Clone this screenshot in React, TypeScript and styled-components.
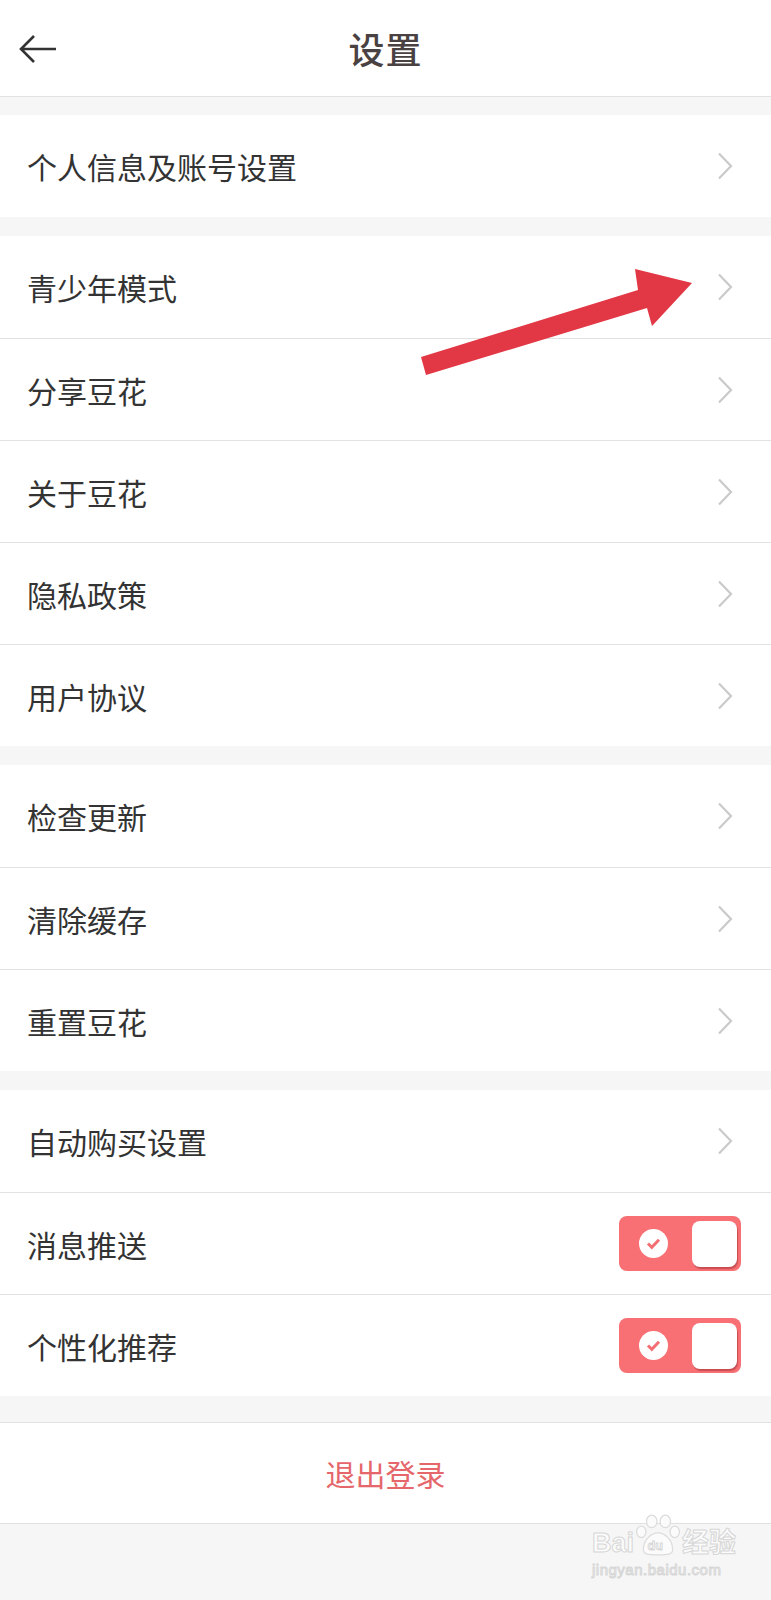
import styled, { createGlobalStyle } from "styled-components";

type RowType = {
  label: string;
  toggle?: boolean;
};

const groups: RowType[][] = [
  [{ label: "个人信息及账号设置" }],
  [
    { label: "青少年模式" },
    { label: "分享豆花" },
    { label: "关于豆花" },
    { label: "隐私政策" },
    { label: "用户协议" },
  ],
  [{ label: "检查更新" }, { label: "清除缓存" }, { label: "重置豆花" }],
  [
    { label: "自动购买设置" },
    { label: "消息推送", toggle: true },
    { label: "个性化推荐", toggle: true },
  ],
];

const GlobalStyle = createGlobalStyle`
  body {
    margin: 0;
    background: #f6f6f6;
    font-family: "Noto Sans CJK SC", "Noto Sans", sans-serif;
  }
`;

const BackIcon = () => (
  <svg width="40" height="30" viewBox="0 0 40 30" fill="none">
    <path d="M38 15H3M16 2L3 15l13 13" stroke="#333" strokeWidth="2.6" />
  </svg>
);

const Chevron = () => (
  <svg width="16" height="28" viewBox="0 0 16 28" fill="none">
    <path d="M2 1.5l12 12.5-12 12.5" stroke="#cacaca" strokeWidth="2.2" />
  </svg>
);

const Toggle = () => (
  <StyledToggle>
    <StyledCheck>
      <svg width="17" height="17" viewBox="0 0 17 17" fill="none">
        <path d="M3 8.5l3.8 3.8L14 4.8" stroke="#f36f73" strokeWidth="3" />
      </svg>
    </StyledCheck>
    <StyledKnob />
  </StyledToggle>
);

const App = () => {
  return (
    <StyledPage>
      <GlobalStyle />
      <StyledHeader>
        <StyledBack>
          <BackIcon />
        </StyledBack>
        <StyledTitle>设置</StyledTitle>
      </StyledHeader>

      {groups.map((group, gi) => (
        <StyledGroup key={`group-${gi}`} $first={gi === 0}>
          {group.map((row) => (
            <StyledRow key={row.label}>
              <StyledLabel>{row.label}</StyledLabel>
              {row.toggle ? <Toggle /> : <Chevron />}
            </StyledRow>
          ))}
        </StyledGroup>
      ))}

      <StyledLogout>退出登录</StyledLogout>

      {/* annotation arrow drawn over the screenshot */}
      <StyledArrow width="300" height="130" viewBox="0 0 300 130">
        <polygon
          points="11,97 228,30 225,9 282,23 242,66 237,48 16,115"
          fill="#e23744"
        />
      </StyledArrow>

      <StyledWatermark>
        <StyledMarkTop>
          Bai
          <svg width="46" height="42" viewBox="0 0 44 40" fill="none">
            <g stroke="#dcdcdc" strokeWidth="1.2" fill="#fbfbfb">
              <ellipse cx="16" cy="7" rx="5" ry="6" />
              <ellipse cx="29" cy="7" rx="5" ry="6" />
              <ellipse cx="6" cy="17" rx="4.5" ry="5.5" />
              <ellipse cx="38" cy="17" rx="4.5" ry="5.5" />
              <path d="M8 34c0-10 8-16 14-16s14 6 14 16c0 4-4 5-14 5S8 38 8 34z" />
            </g>
            <text x="12" y="34" fontSize="12" fill="#fbfbfb" stroke="#d4d4d4" strokeWidth="0.8" fontFamily="Liberation Sans, sans-serif">
              du
            </text>
          </svg>
          经验
        </StyledMarkTop>
        <StyledMarkBottom>jingyan.baidu.com</StyledMarkBottom>
      </StyledWatermark>
    </StyledPage>
  );
};

export default App;

const StyledPage = styled.div`
  position: relative;
  min-height: 1600px;
  background: #f6f6f6;
  color: #333;
`;

const StyledHeader = styled.header`
  height: 97px;
  box-sizing: border-box;
  background: #fff;
  border-bottom: 1px solid #e2e2e2;
  display: flex;
  align-items: center;
  justify-content: center;
  position: relative;
`;

const StyledBack = styled.div`
  position: absolute;
  left: 18px;
  top: 34px;
  display: flex;
`;

const StyledTitle = styled.h1`
  margin: 0;
  font-size: 36px;
  font-weight: 500;
  color: #4a4242;
  letter-spacing: 1px;
`;

const StyledGroup = styled.section<{ $first?: boolean }>`
  margin-top: ${(p) => (p.$first ? "18px" : "19px")};
  background: #fff;
`;

const StyledRow = styled.div`
  height: 102px;
  box-sizing: border-box;
  display: flex;
  align-items: center;
  justify-content: space-between;
  padding: 0 30px 0 27px;

  & + & {
    border-top: 1px solid #e2e2e2;
  }

  & > svg {
    margin-right: 8px;
  }
`;

const StyledLabel = styled.span`
  font-size: 30px;
  color: #333;
  line-height: 1;
`;

const StyledToggle = styled.div`
  width: 122px;
  height: 55px;
  border-radius: 8px;
  background: #f87073;
  display: flex;
  align-items: center;
  justify-content: space-between;
  padding: 0 4px 0 20px;
  box-sizing: border-box;
`;

const StyledCheck = styled.div`
  width: 29px;
  height: 29px;
  border-radius: 50%;
  background: #fff;
  display: flex;
  align-items: center;
  justify-content: center;
`;

const StyledKnob = styled.div`
  width: 45px;
  height: 46px;
  border-radius: 8px;
  background: #fff;
  box-shadow: 1px 2px 1px rgba(160, 50, 55, 0.55);
`;

const StyledLogout = styled.div`
  margin-top: 26px;
  height: 102px;
  box-sizing: border-box;
  background: #fff;
  border-top: 1px solid #e0e0e0;
  border-bottom: 1px solid #e0e0e0;
  display: flex;
  align-items: center;
  justify-content: center;
  font-size: 30px;
  color: #e5676b;
`;

const StyledArrow = styled.svg`
  position: absolute;
  left: 410px;
  top: 260px;
`;

const StyledWatermark = styled.div`
  position: absolute;
  left: 592px;
  top: 1514px;
  display: flex;
  flex-direction: column;
  align-items: flex-start;
  font-family: "Liberation Sans", "Noto Sans CJK SC", sans-serif;
  color: #fbfbfb;
  -webkit-text-stroke: 1px #d6d6d6;
`;

const StyledMarkTop = styled.div`
  display: flex;
  align-items: flex-end;
  font-size: 27px;
  font-weight: 700;
  line-height: 26px;

  & > svg {
    margin: 0 1px;
  }
`;

const StyledMarkBottom = styled.div`
  margin-top: 5px;
  font-size: 15px;
  letter-spacing: 0.5px;
`;
